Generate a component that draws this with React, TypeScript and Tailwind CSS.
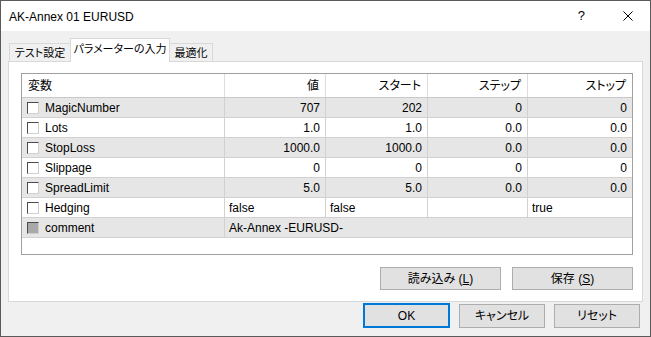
import React from 'react';

type Row = {
  name: string;
  vals: string[];
  shaded: boolean;
  kind?: 'bool' | 'text';
  disabled?: boolean;
};

const rows: Row[] = [
  { name: 'MagicNumber', vals: ['707', '202', '0', '0'], shaded: true },
  { name: 'Lots', vals: ['1.0', '1.0', '0.0', '0.0'], shaded: false },
  { name: 'StopLoss', vals: ['1000.0', '1000.0', '0.0', '0.0'], shaded: true },
  { name: 'Slippage', vals: ['0', '0', '0', '0'], shaded: false },
  { name: 'SpreadLimit', vals: ['5.0', '5.0', '0.0', '0.0'], shaded: true },
  { name: 'Hedging', vals: ['false', 'false', '', 'true'], shaded: false, kind: 'bool' },
  { name: 'comment', vals: ['Ak-Annex -EURUSD-'], shaded: true, kind: 'text', disabled: true },
];

const colW = ['w-[101px]', 'w-[102px]', 'w-[100px]'];

function Check({ disabled }: { disabled?: boolean }) {
  return (
    <span
      className={`inline-block w-[12px] h-[12px] shrink-0 border border-t-[#4a4a4a] border-l-[#4a4a4a] border-b-[#d0d0d0] border-r-[#d0d0d0] ${
        disabled ? 'bg-[#a9a9a9]' : 'bg-white'
      }`}
    />
  );
}

function Btn({ children, className = '' }: { children: React.ReactNode; className?: string }) {
  return (
    <div
      className={`flex items-center justify-center bg-[#e1e1e1] border border-[#adadad] text-black whitespace-nowrap ${className}`}
    >
      {children}
    </div>
  );
}

export default function App() {
  return (
    <div className="w-[651px] h-[337px] border border-[#5a5a5a] bg-[#f0f0f0] flex flex-col text-[12px] text-black font-['Liberation_Sans','Noto_Sans_CJK_JP',sans-serif] [font-feature-settings:'palt'] overflow-hidden">
      {/* title bar */}
      <div className="h-[30px] bg-white flex items-center pl-[8px] shrink-0">
        <span className="flex-1 pt-[1px]">AK-Annex 01 EURUSD</span>
        <span className="text-[13px] mr-[38px]">?</span>
        <svg width="10" height="10" viewBox="0 0 10 10" className="mr-[17px]">
          <path d="M0.5 0.5L9.5 9.5M9.5 0.5L0.5 9.5" stroke="#000" strokeWidth="1" />
        </svg>
      </div>

      <div className="flex flex-col px-[7px] pt-[7px]">
        {/* tabs */}
        <div className="flex items-end h-[24px] pl-[1px] -mb-px relative z-10 whitespace-nowrap text-[11px]">
          <div className="w-[62px] h-[19px] border border-[#d9d9d9] border-b-0 flex items-center justify-center">
            テスト設定
          </div>
          <div className="w-[100px] h-[24px] bg-white border border-[#d9d9d9] border-b-0 -ml-px flex items-center justify-center pb-[2px]">
            パラメーターの入力
          </div>
          <div className="w-[44px] h-[19px] border border-[#d9d9d9] border-b-0 -ml-px flex items-center justify-center">
            最適化
          </div>
        </div>

        {/* panel */}
        <div className="h-[241px] bg-white border border-[#d9d9d9] pt-[11px] pl-[12px] pr-[9px] flex flex-col">
          <div className="h-[182px] border border-[#a0a0a0] flex flex-col bg-white">
            <div className="h-[24px] flex border-b border-[#c8c8c8] shrink-0">
              <div className="w-[203px] border-r border-[#e0dcdc] flex items-center pl-[6px]">変数</div>
              {['値', 'スタート', 'ステップ'].map((h, i) => (
                <div key={h} className={`${colW[i]} border-r border-[#e0dcdc] flex items-center justify-end pr-[6px]`}>
                  {h}
                </div>
              ))}
              <div className="flex-1 flex items-center justify-end pr-[6px]">ストップ</div>
            </div>
            {rows.map((r) => (
              <div
                key={r.name}
                className={`h-[20px] flex border-b border-[#d4d0d0] shrink-0 ${r.shaded ? 'bg-[#e6e6e6]' : 'bg-white'}`}
              >
                <div className="w-[203px] border-r border-[#d4d0d0] flex items-center pl-[5px]">
                  <Check disabled={r.disabled} />
                  <span className="ml-[6px]">{r.name}</span>
                </div>
                {r.kind === 'text' ? (
                  <div className="flex-1 flex items-center pl-[4px]">{r.vals[0]}</div>
                ) : (
                  <>
                    {r.vals.slice(0, 3).map((v, i) => (
                      <div
                        key={i}
                        className={`${colW[i]} border-r border-[#d4d0d0] flex items-center ${
                          r.kind === 'bool' ? 'pl-[4px]' : 'justify-end pr-[5px]'
                        }`}
                      >
                        {v}
                      </div>
                    ))}
                    <div
                      className={`flex-1 flex items-center ${r.kind === 'bool' ? 'pl-[4px]' : 'justify-end pr-[5px]'}`}
                    >
                      {r.vals[3]}
                    </div>
                  </>
                )}
              </div>
            ))}
          </div>

          <div className="flex justify-end gap-[11px] mt-[12px]">
            <Btn className="w-[121px] h-[23px]">
              読み込み (<span className="underline">L</span>)
            </Btn>
            <Btn className="w-[121px] h-[23px]">
              保存 (<span className="underline">S</span>)
            </Btn>
          </div>
        </div>

        {/* bottom buttons */}
        <div className="flex justify-end gap-[9px] mt-[1px] pr-[3px]">
          <div className="w-[87px] h-[25px] flex items-center justify-center bg-[#e1e1e1] border-2 border-[#0078d7]">
            OK
          </div>
          <Btn className="w-[86px] h-[24px] mt-[1px]">キャンセル</Btn>
          <Btn className="w-[86px] h-[24px] mt-[1px]">リセット</Btn>
        </div>
      </div>
    </div>
  );
}
